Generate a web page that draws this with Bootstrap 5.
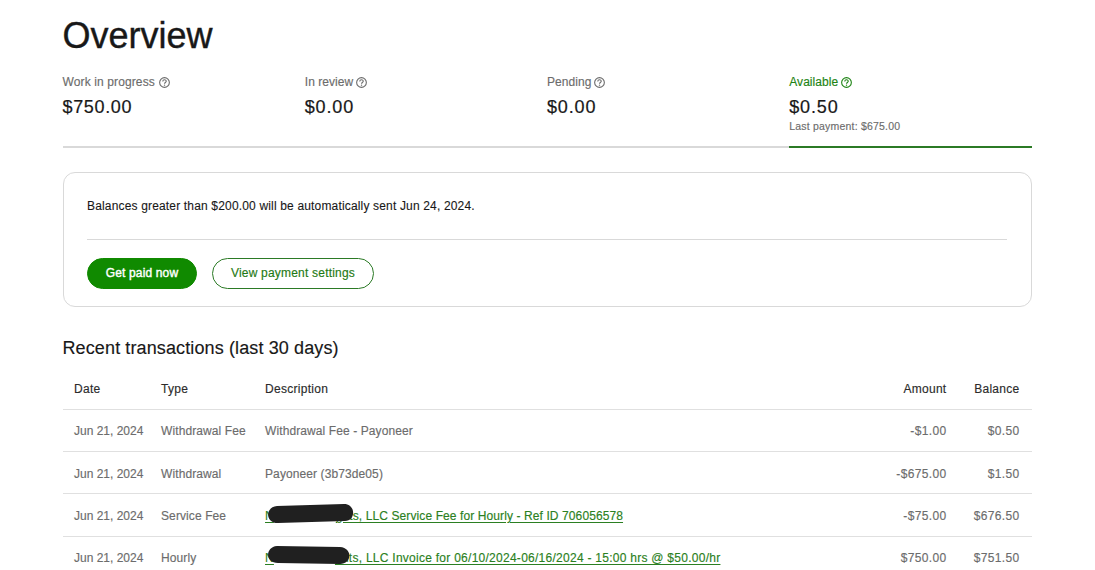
<!DOCTYPE html>
<html lang="en">
<head>
<meta charset="utf-8">
<meta name="viewport" content="width=device-width, initial-scale=1">
<title>Overview</title>
<link href="https://cdn.jsdelivr.net/npm/bootstrap@5.3.0/dist/css/bootstrap.min.css" rel="stylesheet">
<style>
  body { font-family: "Liberation Sans", Arial, sans-serif; font-size: 12px; line-height: 18px; color: #181818; background: #fff; overflow: hidden; }
  .page { width: 969px; margin-left: 62.5px; padding-top: 15px; }
  .page h1 { font-size: 36px; line-height: 42px; font-weight: 400; letter-spacing: 0; -webkit-text-stroke: .4px #181818; }
  .stats { padding-top: 16px; }
  .stat { height: 75px; border-bottom: 2px solid #d9d9d9; color: #6c6c6c; }
  .stat.current { border-color: #2b7a25; }
  .stat.current .stat-label { color: #1e8414; }
  .stat-label { letter-spacing: .12px; gap: 4px; height: 18px; -webkit-text-stroke: .15px; }
  .stat-value { font-size: 18px; line-height: 24px; letter-spacing: .65px; color: #181818; margin-top: 4px; -webkit-text-stroke: .2px; }
  .short .stat-label { gap: 3px; letter-spacing: .05px; }
  .short .stat-value { letter-spacing: .85px; }
  .stat-note { font-size: 10.5px; line-height: 15px; letter-spacing: .2px; -webkit-text-stroke: .15px; }
  .payout { height: 135px; margin-top: 24px; border: 1px solid #d9d9d9; border-radius: 12px; padding: 24px 24px 24px 23.5px; }
  .payout p { letter-spacing: .165px; -webkit-text-stroke: .1px; }
  .payout-rule { border-top: 1px solid #d9d9d9; margin-top: 24px; padding-top: 18px; }
  .pill { height: 31px; border-radius: 16px; font-size: 12px; line-height: 18px; padding: 4px 0 6px; }
  .pill-main { width: 110px; background: #108a00; border-color: #108a00; color: #fff; -webkit-text-stroke: .4px #fff; letter-spacing: .15px; }
  .pill-line { width: 162px; margin-left: 15px; border-color: #2b7a25; color: #1f7a15; letter-spacing: .2px; -webkit-text-stroke: .15px; }
  .page h2 { font-size: 18px; line-height: 24px; font-weight: 400; margin-top: 29px; letter-spacing: .12px; -webkit-text-stroke: .15px; }
  .ledger { table-layout: fixed; width: 969px; --bs-table-color: #6c6c6c; color: #6c6c6c; margin-top: 7px; -webkit-text-stroke: .15px; }
  .ledger > :not(caption) > * > * { height: 42.3px; padding: 1.6px 12px 0 11.5px; vertical-align: middle; border-bottom: 1px solid #e0e0e0; white-space: nowrap; letter-spacing: .1px; }
  .ledger > thead > tr > th { font-weight: 400; color: #2b2b2b; letter-spacing: .28px; }
  .ledger > tbody > tr > td:first-child { letter-spacing: 0; }
  .ledger > tbody > tr > td.text-end { letter-spacing: .35px; }
  .ledger a { color: #2b7f22; text-decoration: underline; text-underline-offset: 2px; letter-spacing: .1px; }
  .ledger a.invoice { letter-spacing: .265px; }
  .redacted { position: relative; display: inline-block; height: 10px; }
  .redacted svg { position: absolute; left: -6px; top: -6px; overflow: visible; }
</style>
<script src="https://cdn.jsdelivr.net/npm/bootstrap@5.3.0/dist/js/bootstrap.bundle.min.js"></script>
</head>
<body>
<svg class="d-none">
  <symbol id="help" viewBox="0 0 12 12"><g fill="none" stroke="currentColor" stroke-width="1.2"><circle cx="6" cy="6" r="5.300"/><path d="M4.100 4.900c0-2.500 3.800-2.400 3.800-.2C7.900 6 6 6 6 7.400"/></g><circle cx="6" cy="8.900" r=".75" fill="currentColor"/></symbol>
</svg>
<main class="page">
  <h1 class="mb-0">Overview</h1>
  <section class="row g-0 stats">
    <div class="col-3 stat"><div class="stat-label d-flex align-items-center">Work in progress <svg width="11" height="11"><use href="#help"/></svg></div><div class="stat-value">$750.00</div></div>
    <div class="col-3 stat short"><div class="stat-label d-flex align-items-center">In review <svg width="11" height="11"><use href="#help"/></svg></div><div class="stat-value">$0.00</div></div>
    <div class="col-3 stat short"><div class="stat-label d-flex align-items-center">Pending <svg width="11" height="11"><use href="#help"/></svg></div><div class="stat-value">$0.00</div></div>
    <div class="col-3 stat short current"><div class="stat-label d-flex align-items-center">Available <svg width="11" height="11"><use href="#help"/></svg></div><div class="stat-value">$0.50</div><div class="stat-note">Last payment: $675.00</div></div>
  </section>
  <section class="payout">
    <p class="mb-0">Balances greater than $200.00 will be automatically sent Jun 24, 2024.</p>
    <div class="payout-rule d-flex">
      <button class="btn pill pill-main">Get paid now</button>
      <button class="btn pill pill-line">View payment settings</button>
    </div>
  </section>
  <h2 class="mb-0">Recent transactions (last 30 days)</h2>
  <table class="table ledger mb-0">
    <colgroup><col style="width:87px"><col style="width:104px"><col><col style="width:110px"><col style="width:73px"></colgroup>
    <thead><tr><th>Date</th><th>Type</th><th>Description</th><th class="text-end">Amount</th><th class="text-end">Balance</th></tr></thead>
    <tbody>
      <tr><td>Jun 21, 2024</td><td>Withdrawal Fee</td><td>Withdrawal Fee - Payoneer</td><td class="text-end">-$1.00</td><td class="text-end">$0.50</td></tr>
      <tr><td>Jun 21, 2024</td><td>Withdrawal</td><td>Payoneer (3b73de05)</td><td class="text-end">-$675.00</td><td class="text-end">$1.50</td></tr>
      <tr><td>Jun 21, 2024</td><td>Service Fee</td><td><a href="#">N<span class="redacted" style="width:62px"><svg width="86" height="20"><path d="M9 2 L76 0 C88 0 88 17 77 17 L10 19 C-3 19-3 3 9 2Z" fill="#202020"/></svg></span>ghts, LLC Service Fee for Hourly - Ref ID 706056578</a></td><td class="text-end">-$75.00</td><td class="text-end">$676.50</td></tr>
      <tr><td>Jun 21, 2024</td><td>Hourly</td><td><a href="#" class="invoice">N<span class="redacted" style="width:61px"><svg width="82" height="20"><path d="M9 0 L72 1 C85 2 84 18 72 18 L10 17 C-3 17-3 1 9 0Z" fill="#202020"/></svg></span>ghts, LLC Invoice for 06/10/2024-06/16/2024 - 15:00 hrs @ $50.00/hr</a></td><td class="text-end">$750.00</td><td class="text-end">$751.50</td></tr>
    </tbody>
  </table>
</main>
</body>
</html>
